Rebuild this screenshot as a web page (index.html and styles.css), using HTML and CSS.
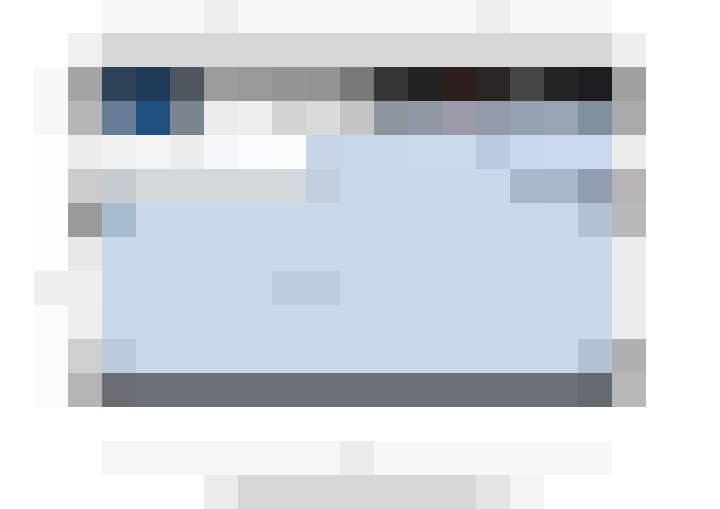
FILE: index.html
```html
<!DOCTYPE html>
<html lang="en">
<head>
<meta charset="utf-8">
<title>Window preview</title>
<link rel="stylesheet" href="styles.css">
</head>
<body>
<div class="page">
  <div class="topline"></div>
  <div class="shell">
    <div class="gutter"></div>
    <div class="frame frame-left"></div>
    <main class="window">
      <div class="titlebar"></div>
      <header class="header">
        <svg class="brand" width="102" height="68" viewBox="0 0 102 68" aria-hidden="true">
          <rect x="0" y="0" width="34" height="34" fill="#2e4257"/>
          <rect x="34" y="0" width="34" height="34" fill="#213b5a"/>
          <rect x="68" y="0" width="34" height="34" fill="#50565e"/>
          <rect x="0" y="34" width="34" height="34" fill="#657c95"/>
          <rect x="34" y="34" width="34" height="34" fill="#1f5080"/>
          <rect x="68" y="34" width="34" height="34" fill="#7a858f"/>
        </svg>
        <nav class="nav">
          <div class="nav-top"></div>
          <div class="nav-bottom"></div>
        </nav>
        <div class="hero">
          <div class="hero-top"></div>
          <div class="hero-bottom"></div>
        </div>
      </header>
      <section class="content">
        <div class="row filters"></div>
        <div class="row toolbar"></div>
        <div class="row list-head"></div>
        <div class="row"></div>
        <div class="row selection"></div>
        <div class="row"></div>
        <div class="row list-foot"></div>
      </section>
      <footer class="statusbar"></footer>
    </main>
    <div class="frame frame-right"></div>
  </div>
  <div class="caption">
    <div class="caption-sub"></div>
    <div class="caption-title"></div>
  </div>
</div>
</body>
</html>
```

FILE: styles.css
```css
html, body {
  margin: 0;
  padding: 0;
  background: #ffffff;
  font-family: "Liberation Sans", Arial, sans-serif;
}

.page {
  width: 720px;
  height: 509px;
  overflow: hidden;
  display: flex;
  flex-direction: column;
}

.topline {
  margin-left: 102px;
  width: 510px;
  height: 34px;
  background: linear-gradient(to right,
    #f8f8f8 0 102px, #eeeeee 102px 136px, #f8f8f8 136px 374px,
    #eeeeee 374px 408px, #f8f8f8 408px 510px);
}

.shell {
  display: flex;
  height: 374px;
  margin-left: 34px;
}

.gutter {
  width: 34px;
  flex: none;
  background: linear-gradient(to bottom,
    #ffffff 0 34px, #f8f8f8 34px 102px, #fdfdfd 102px 238px,
    #eeeeee 238px 272px, #fbfbfb 272px 374px);
}

.frame {
  width: 34px;
  flex: none;
}

.frame-left {
  background: linear-gradient(to bottom,
    #f0f0f0 0 34px, #a4a4a4 34px 68px, #b6b6b6 68px 102px,
    #ececec 102px 136px, #cccccc 136px 170px, #9a9a9a 170px 204px,
    #e8e8e8 204px 238px, #efefef 238px 272px, #eeeeee 272px 306px,
    #cfcfcf 306px 340px, #b4b4b4 340px 374px);
}

.frame-right {
  background: linear-gradient(to bottom,
    #eeeeee 0 34px, #a0a0a0 34px 68px, #aaaaaa 68px 102px,
    #ececec 102px 136px, #b6b4b4 136px 170px, #b8b8b8 170px 204px,
    #ececec 204px 306px, #b0b0b0 306px 340px, #b8b8b8 340px 374px);
}

.window {
  width: 510px;
  flex: none;
  display: flex;
  flex-direction: column;
}

.titlebar {
  height: 34px;
  background: #d7d7d7;
}

.header {
  display: flex;
  height: 68px;
}

.brand {
  display: block;
  flex: none;
}

.nav {
  width: 170px;
  flex: none;
  display: flex;
  flex-direction: column;
}

.nav-top,
.nav-bottom,
.hero-top,
.hero-bottom {
  height: 34px;
}

.nav-top {
  background: linear-gradient(to right,
    #9c9c9c 0 34px, #999999 34px 68px, #959595 68px 102px,
    #939393 102px 136px, #787878 136px 170px);
}

.nav-bottom {
  background: linear-gradient(to right,
    #ececec 0 34px, #eeeeee 34px 68px, #d4d4d4 68px 102px,
    #dadada 102px 136px, #c4c4c4 136px 170px);
}

.hero {
  width: 238px;
  flex: none;
  display: flex;
  flex-direction: column;
}

.hero-top {
  background: linear-gradient(to right,
    #363636 0 34px, #222222 34px 68px, #2c1e1c 68px 102px,
    #2a2626 102px 136px, #454545 136px 170px, #232323 170px 204px,
    #1e1e20 204px 238px);
}

.hero-bottom {
  background: linear-gradient(to right,
    #8d959e 0 34px, #9098a6 34px 68px, #9c9aa8 68px 102px,
    #949aaa 102px 136px, #96a2b0 136px 170px, #98a4b2 170px 204px,
    #80909c 204px 238px);
}

.content {
  display: flex;
  flex-direction: column;
  background: #c9d9ec;
}

.row {
  height: 34px;
}

.filters {
  background: linear-gradient(to right,
    #f1f1f1 0 34px, #f4f4f4 34px 68px, #ececec 68px 102px,
    #f7f8f9 102px 136px, #fafbfc 136px 170px, #fbfbfb 170px 204px,
    #c8d5e4 204px 238px, #c8d8ea 238px 272px, #c8daea 272px 306px,
    #c9dbea 306px 374px, #b9cbe0 374px 408px, #c8d8ec 408px 442px,
    #cad9ee 442px 510px);
}

.toolbar {
  background: linear-gradient(to right,
    #c7ccd2 0 34px, #d3d8dd 34px 204px, #c2cfdc 204px 238px,
    #c9d9ec 238px 408px, #a8b9cc 408px 442px, #a6b8ca 442px 476px,
    #909eaf 476px 510px);
}

.list-head {
  background: linear-gradient(to right,
    #a8bcd0 0 34px, #c9d9ec 34px 476px, #b0c2d4 476px 510px);
}

.selection {
  background: linear-gradient(to right,
    #c9d9ec 0 170px, #bccde0 170px 238px, #c9d9ec 238px 510px);
}

.list-foot {
  background: linear-gradient(to right,
    #bccbdc 0 34px, #c9d9ec 34px 476px, #b0c2d4 476px 510px);
}

.statusbar {
  height: 34px;
  background: linear-gradient(to right,
    #6a6e74 0 34px, #6c7078 34px 476px, #646a70 476px 510px);
}

.caption {
  margin-top: 34px;
  display: flex;
  flex-direction: column;
}

.caption-sub {
  margin-left: 102px;
  width: 510px;
  height: 34px;
  background: linear-gradient(to right,
    #f6f6f6 0 238px, #ececec 238px 272px, #f8f8f8 272px 510px);
}

.caption-title {
  margin-left: 204px;
  width: 340px;
  height: 34px;
  background: linear-gradient(to right,
    #ececec 0 34px, #d7d7d7 34px 272px, #e4e4e4 272px 306px,
    #f4f4f4 306px 340px);
}
```
